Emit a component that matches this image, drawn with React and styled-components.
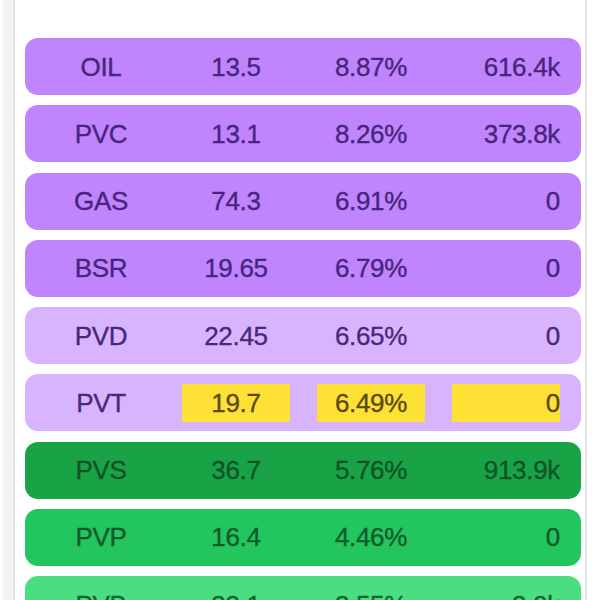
import React from "react";
import styled, { createGlobalStyle } from "styled-components";

const GlobalStyle = createGlobalStyle`
  html, body {
    margin: 0;
    padding: 0;
    background: #ffffff;
  }
  body {
    font-family: "Liberation Sans", Arial, sans-serif;
  }
`;

const rows = [
  { name: "OIL", price: "13.5", change: "8.87%", volume: "616.4k", tone: "purple" },
  { name: "PVC", price: "13.1", change: "8.26%", volume: "373.8k", tone: "purple" },
  { name: "GAS", price: "74.3", change: "6.91%", volume: "0", tone: "purple" },
  { name: "BSR", price: "19.65", change: "6.79%", volume: "0", tone: "purple" },
  { name: "PVD", price: "22.45", change: "6.65%", volume: "0", tone: "lilac" },
  { name: "PVT", price: "19.7", change: "6.49%", volume: "0", tone: "lilac", flash: true },
  { name: "PVS", price: "36.7", change: "5.76%", volume: "913.9k", tone: "deepGreen" },
  { name: "PVP", price: "16.4", change: "4.46%", volume: "0", tone: "green" },
  { name: "PVB", price: "33.1", change: "3.55%", volume: "8.9k", tone: "lightGreen" },
];

const tones = {
  purple: { bg: "#c084fc", fg: "#47257e" },
  lilac: { bg: "#d8b4fe", fg: "#47287a" },
  deepGreen: { bg: "#19a246", fg: "#0f5429" },
  green: { bg: "#22c55e", fg: "#125a2e" },
  lightGreen: { bg: "#4ade80", fg: "#166534" },
};

function App() {
  return (
    <Page>
      <GlobalStyle />
      <Panel>
        <List>
          {rows.map((r) => (
            <Row key={r.name} $tone={r.tone}>
              <Cell $align="center">{r.name}</Cell>
              <Cell $align="center" $flash={r.flash}>{r.price}</Cell>
              <Cell $align="center" $flash={r.flash}>{r.change}</Cell>
              <Cell $align="right" $flash={r.flash}>{r.volume}</Cell>
            </Row>
          ))}
        </List>
      </Panel>
    </Page>
  );
}

export default App;

const Page = styled.div`
  width: 600px;
  height: 600px;
  overflow: hidden;
  box-sizing: border-box;
  padding-left: 3px;
  background: #ffffff;
`;

const Panel = styled.div`
  width: 582px;
  min-height: 700px;
  box-sizing: border-box;
  background: #f4f4f6;
  padding: 0 12px 0 10px;
  display: flex;
`;

const List = styled.div`
  flex: 1;
  background: #ffffff;
  border-left: 2px solid #e3e3e8;
  border-right: 2px solid #e3e3e8;
  padding: 38px 4px 0 10px;
  display: flex;
  flex-direction: column;
  gap: 10.25px;
`;

const Row = styled.div`
  height: 57px;
  box-sizing: border-box;
  border-radius: 13px;
  background: ${(p) => tones[p.$tone].bg};
  color: ${(p) => tones[p.$tone].fg};
  display: grid;
  grid-template-columns: repeat(4, 108px);
  column-gap: 27px;
  align-items: center;
  padding: 0 21px 0 22px;
  font-size: 26px;
  letter-spacing: -0.3px;
  -webkit-text-stroke: 0.35px currentColor;
`;

const Cell = styled.div`
  height: 38px;
  line-height: 38px;
  text-align: ${(p) => p.$align};
  background: ${(p) => (p.$flash ? "#fde135" : "transparent")};
  color: ${(p) => (p.$flash ? "#5a4a12" : "inherit")};
`;
